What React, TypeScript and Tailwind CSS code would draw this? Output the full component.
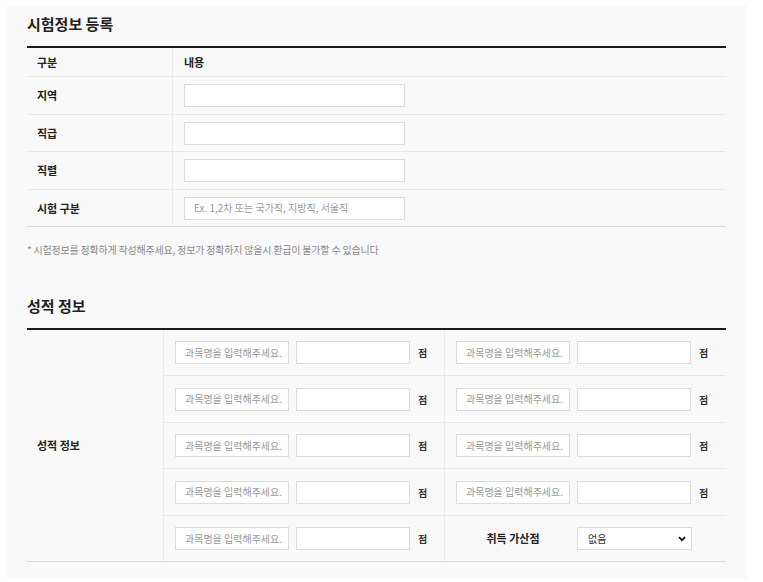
import React from "react";

const font = { fontFamily: '"Noto Sans CJK KR", "Noto Sans", sans-serif' };

function TextBox({ w, placeholder }: { w: string; placeholder?: string }) {
  return (
    <div
      className={`${w} h-[23px] border border-[#dcdcdc] bg-white flex items-center pl-[9px] text-[10px] text-[#9a9a9a] leading-none`}
    >
      {placeholder ?? ""}
    </div>
  );
}

function ScoreCell({ last }: { last?: boolean }) {
  return (
    <div
      className={`flex items-center pl-[11px] gap-[7px] ${last ? "" : "border-r border-[#ececec]"}`}
    >
      <TextBox w="w-[114px]" placeholder="과목명을 입력해주세요." />
      <TextBox w="w-[114px]" />
      <span className="ml-[1px] text-[10px] font-bold text-[#333]">점</span>
    </div>
  );
}

function InfoRow({ label, h, placeholder }: { label: string; h: string; placeholder?: string }) {
  return (
    <div className={`flex ${h} border-b border-[#e9e9e9]`}>
      <div className="w-[146px] border-r border-[#ececec] flex items-center pl-[10px] text-[11px] font-bold text-[#222]">
        {label}
      </div>
      <div className="flex-1 flex items-center pl-[11px]">
        <TextBox w="w-[221px]" placeholder={placeholder} />
      </div>
    </div>
  );
}

export default function App() {
  const scoreHeights = ["h-[46px]", "h-[47px]", "h-[46px]", "h-[47px]"];
  return (
    <div className="w-[763px] h-[582px] bg-white pt-[5px] pl-[7px]" style={font}>
      <div className="w-[739px] h-[574px] bg-[#f9f9f9] px-5">
        {/* Section 1 */}
        <div className="h-[41px] flex items-center pb-[2px] text-[15px] font-bold text-[#222]">
          시험정보 등록
        </div>
        <div className="border-t-2 border-[#1a1a1a] border-b border-b-[#dcdcdc]">
          <div className="flex h-[29px] border-b border-[#e9e9e9]">
            <div className="w-[146px] border-r border-[#ececec] flex items-center pl-[10px] text-[11px] font-bold text-[#222]">
              구분
            </div>
            <div className="flex-1 flex items-center pl-[11px] text-[11px] font-bold text-[#222]">
              내용
            </div>
          </div>
          <InfoRow label="지역" h="h-[38px]" />
          <InfoRow label="직급" h="h-[37px]" />
          <InfoRow label="직렬" h="h-[38px]" />
          <div className="flex h-[36px]">
            <div className="w-[146px] border-r border-[#ececec] flex items-center pl-[10px] text-[11px] font-bold text-[#222]">
              시험 구분
            </div>
            <div className="flex-1 flex items-center pl-[11px]">
              <TextBox w="w-[221px]" placeholder="Ex. 1,2차 또는 국가직, 지방직, 서울직" />
            </div>
          </div>
        </div>
        <div className="mt-[15px] h-[14px] flex items-center text-[10px] tracking-[-0.2px] text-[#8a8a8a]">
          * 시험정보를 정확하게 작성해주세요, 정보가 정확하지 않을시 환급이 불가할 수 있습니다
        </div>

        {/* Section 2 */}
        <div className="mt-[31px] h-[41px] flex items-center pb-[2px] text-[15px] font-bold text-[#222]">
          성적 정보
        </div>
        <div className="flex border-t-2 border-[#1a1a1a] border-b border-b-[#dcdcdc]">
          <div className="w-[137px] border-r border-[#ececec] flex items-center pl-[10px] text-[11px] font-bold text-[#222]">
            성적 정보
          </div>
          <div className="flex-1 flex flex-col">
            {scoreHeights.map((h, i) => (
              <div key={i} className={`grid grid-cols-2 ${h} border-b border-[#e9e9e9]`}>
                <ScoreCell />
                <ScoreCell last />
              </div>
            ))}
            <div className="grid grid-cols-2 h-[45px]">
              <ScoreCell />
              <div className="flex items-center pl-[11px] gap-[7px]">
                <div className="w-[114px] flex justify-center text-[11px] font-bold text-[#222]">
                  취득 가산점
                </div>
                <div className="w-[115px] h-[23px] border border-[#dcdcdc] bg-white flex items-center justify-between pl-[10px] pr-[5px] text-[10px] text-[#333]">
                  <span>없음</span>
                  <svg width="8" height="6" viewBox="0 0 8 6">
                    <path d="M1 1.2 L4 4.2 L7 1.2" fill="none" stroke="#111" strokeWidth="1.8" />
                  </svg>
                </div>
              </div>
            </div>
          </div>
        </div>
      </div>
    </div>
  );
}
